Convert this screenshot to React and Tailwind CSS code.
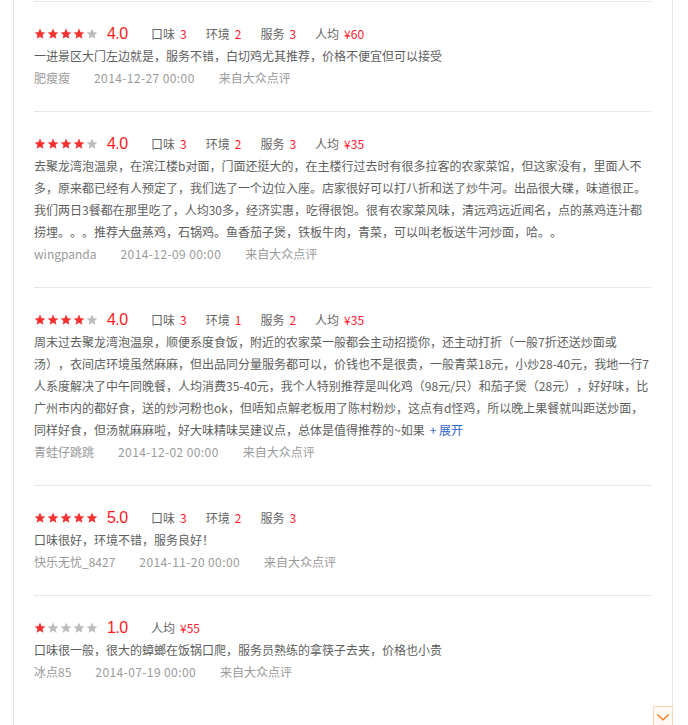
import React from "react";

const reviews = [
  {
    score: 4,
    items: [["口味", "3"], ["环境", "2"], ["服务", "3"], ["人均", "¥60"]],
    lines: ["一进景区大门左边就是，服务不错，白切鸡尤其推荐，价格不便宜但可以接受"],
    user: "肥瘦瘦",
    date: "2014-12-27 00:00",
  },
  {
    score: 4,
    items: [["口味", "3"], ["环境", "2"], ["服务", "3"], ["人均", "¥35"]],
    lines: [
      "去聚龙湾泡温泉，在滨江楼b对面，门面还挺大的，在主楼行过去时有很多拉客的农家菜馆，但这家没有，里面人不",
      "多，原来都已经有人预定了，我们选了一个边位入座。店家很好可以打八折和送了炒牛河。出品很大碟，味道很正。",
      "我们两日3餐都在那里吃了，人均30多，经济实惠，吃得很饱。很有农家菜风味，清远鸡远近闻名，点的蒸鸡连汁都",
      "捞埋。。。推荐大盘蒸鸡，石锅鸡。鱼香茄子煲，铁板牛肉，青菜，可以叫老板送牛河炒面，哈。。",
    ],
    user: "wingpanda",
    date: "2014-12-09 00:00",
  },
  {
    score: 4,
    items: [["口味", "3"], ["环境", "1"], ["服务", "2"], ["人均", "¥35"]],
    lines: [
      "周末过去聚龙湾泡温泉，顺便系度食饭，附近的农家菜一般都会主动招揽你，还主动打折（一般7折还送炒面或",
      "汤），衣间店环境虽然麻麻，但出品同分量服务都可以，价钱也不是很贵，一般青菜18元，小炒28-40元，我地一行7",
      "人系度解决了中午同晚餐，人均消费35-40元，我个人特别推荐是叫化鸡（98元/只）和茄子煲（28元），好好味，比",
      "广州市内的都好食，送的炒河粉也ok，但唔知点解老板用了陈村粉炒，这点有d怪鸡，所以晚上果餐就叫距送炒面，",
      "同样好食，但汤就麻麻啦，好大味精味吴建议点，总体是值得推荐的~如果",
    ],
    more: true,
    user: "青蛙仔跳跳",
    date: "2014-12-02 00:00",
  },
  {
    score: 5,
    items: [["口味", "3"], ["环境", "2"], ["服务", "3"]],
    lines: ["口味很好，环境不错，服务良好！"],
    user: "快乐无忧_8427",
    date: "2014-11-20 00:00",
  },
  {
    score: 1,
    items: [["人均", "¥55"]],
    lines: ["口味很一般，很大的蟑螂在饭锅口爬，服务员熟练的拿筷子去夹，价格也小贵"],
    user: "冰点85",
    date: "2014-07-19 00:00",
  },
];

function Star({ on }) {
  return (
    <svg width="12" height="12" viewBox="0 0 24 24" className="block">
      <path
        d="M12 1.2l3.2 7.1 7.6.7-5.8 5.1 1.8 7.6L12 17.7l-6.8 4 1.8-7.6-5.8-5.1 7.6-.7z"
        fill={on ? "#f53030" : "#bcbcbc"}
      />
    </svg>
  );
}

function Review({ r }) {
  return (
    <div className="border-t border-[#e8e8e8] pt-[21px] pb-[22px]">
      <div className="flex h-[22px] items-center">
        <div className="flex gap-[1px]">
          {[0, 1, 2, 3, 4].map((i) => (
            <Star key={i} on={i < r.score} />
          ))}
        </div>
        <span className="ml-[9px] w-[44px] font-['Liberation_Sans',sans-serif] text-[16px] leading-[22px] tracking-[-0.6px] text-[#ff1a1a]">
          {r.score}.0
        </span>
        {r.items.map(([k, v]) => (
          <span key={k} className="mr-[19px] flex items-center text-[#666]">
            <span>{k}</span>
            <span className="ml-[5px] text-[#ff1a2e]">{v}</span>
          </span>
        ))}
      </div>
      <div className="leading-[22px] text-[#5e5e5e]">
        {r.lines.map((l, i) => (
          <div key={i} className="whitespace-nowrap">
            {l}
            {r.more && i === r.lines.length - 1 && (
              <span className="ml-[5px] text-[#3366cc]">+ 展开</span>
            )}
          </div>
        ))}
      </div>
      <div className="flex gap-[24px] leading-[22px] text-[#9a9a9a]">
        <span>{r.user}</span>
        <span className="tracking-[0.4px]">{r.date}</span>
        <span>来自大众点评</span>
      </div>
    </div>
  );
}

export default function App() {
  return (
    <div className="h-[725px] overflow-hidden bg-white font-['Noto_Sans_CJK_SC',sans-serif] text-[12px] [text-spacing-trim:space-all]">
      <div className="ml-[13px] h-[725px] w-[660px] border-x border-[#e6e6e6] pt-px pl-[20px] pr-[20px]">
        {reviews.map((r, i) => (
          <Review key={i} r={r} />
        ))}
      </div>
      <div className="fixed left-[653px] top-[706px] flex h-[21px] w-[20px] items-start justify-center border border-[#f8d8be] bg-[#fff8f3] pt-[7px]">
        <svg width="12" height="7" viewBox="0 0 12 7">
          <polyline points="0.5,0.5 6,6 11.5,0.5" fill="none" stroke="#ff6a00" strokeWidth="1.2" />
        </svg>
      </div>
    </div>
  );
}
